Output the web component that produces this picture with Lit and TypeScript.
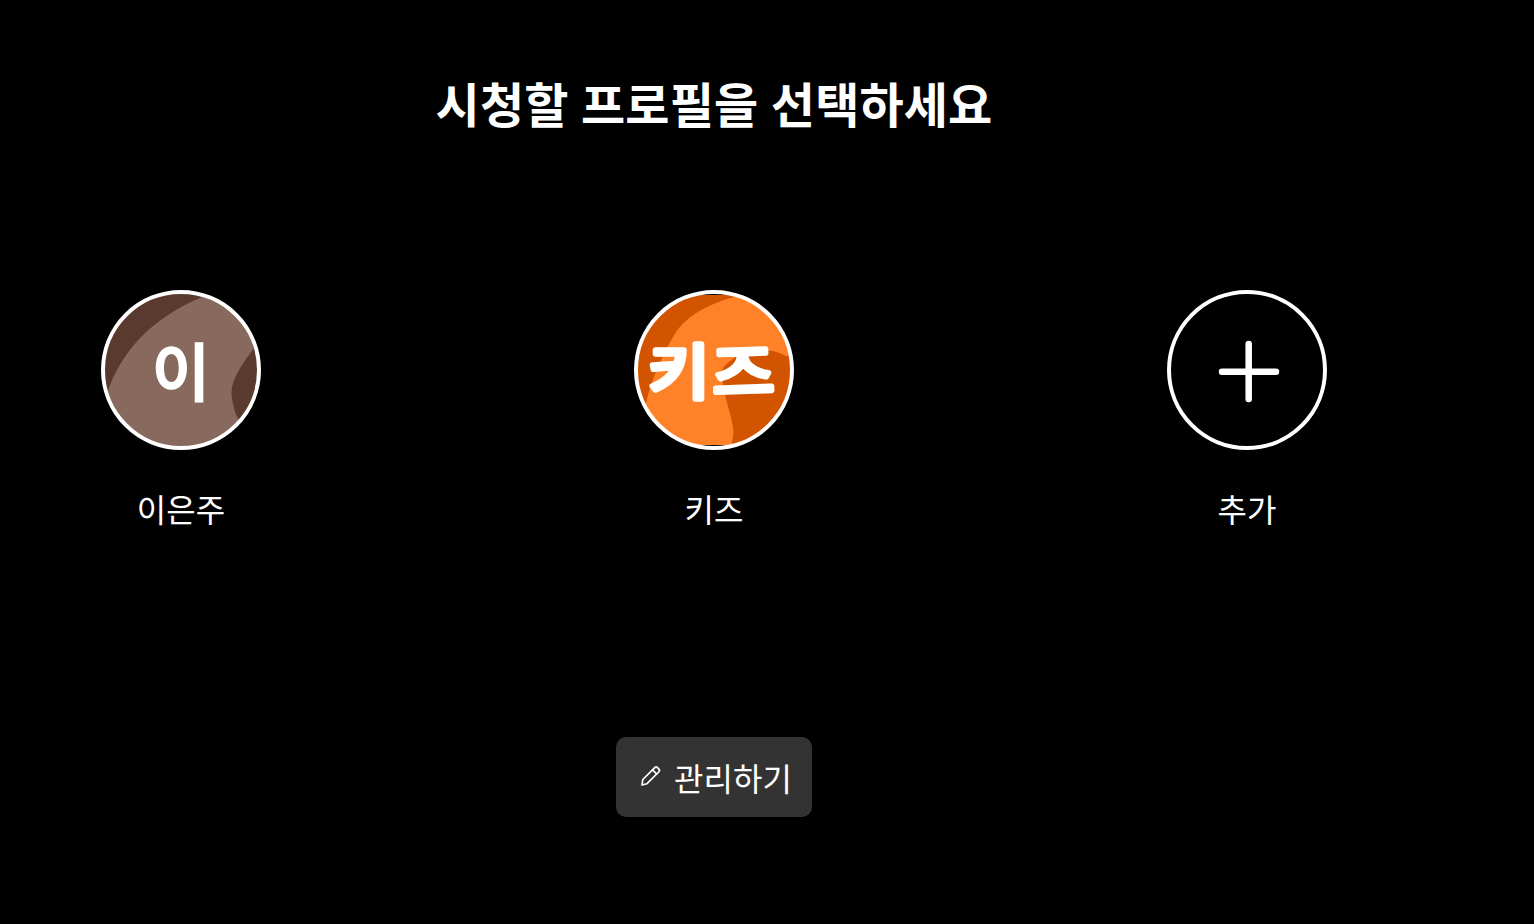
import { LitElement, html, css, svg } from "lit";
import { customElement } from "lit/decorators.js";

@customElement("app-root")
export class AppRoot extends LitElement {
  static styles = css`
    :host { display: block; width: 1534px; height: 924px; background: #000; color: #fff; font-family: "Noto Sans CJK KR", "Noto Sans", sans-serif; overflow: hidden; }
    .page { width: 1428px; height: 924px; display: flex; flex-direction: column; align-items: center; padding-top: 64px; box-sizing: border-box; }
    h1 { margin: 0; font-size: 48px; line-height: 76px; font-weight: 700; height: 76px; white-space: nowrap; letter-spacing: 0.15px; word-spacing: 1.5px; }
    .profiles { width: 100%; display: flex; justify-content: space-between; margin-top: 150px; }
    .profile { width: 362px; display: flex; flex-direction: column; align-items: center; gap: 35px; }
    .avatar { width: 160px; height: 160px; display: block; }
    .avatar text { font-family: "Noto Sans CJK KR", sans-serif; font-weight: 700; fill: #fff; }
    .avatar text.kid { font-weight: 400; stroke: #fff; stroke-width: 5.5px; stroke-linejoin: round; stroke-linecap: round; }
    .label { font-size: 32px; line-height: 46px; font-weight: 400; }
    .manage { margin-top: 206px; height: 80px; width: 196px; box-sizing: border-box; border-radius: 10px; background: #333; display: flex; align-items: center; justify-content: center; gap: 12px; padding-left: 2px; font-size: 32px; color: #fff; }
    .manage svg { width: 24px; height: 24px; flex: none; margin-top: -3px; }
  `;

  private ring() {
    return svg`<circle cx="80" cy="80" r="78" fill="none" stroke="#fff" stroke-width="4"/>`;
  }

  render() {
    return html`
      <div class="page">
        <h1>시청할 프로필을 선택하세요</h1>
        <div class="profiles">
          <div class="profile">
            <svg class="avatar" viewBox="0 0 160 160">
              <defs><clipPath id="c1"><circle cx="80" cy="80" r="78"/></clipPath></defs>
              <g clip-path="url(#c1)">
                <rect width="160" height="160" fill="#88695e"/>
                <path d="M118 0C70 18 28 44 7 100L0 112V0Z" fill="#5a3a2e"/>
                <path d="M153 58C140 76 128 92 131 108C132 116 134 124 138 130L160 140V50Z" fill="#5a3a2e"/>
              </g>
              ${this.ring()}
              <text x="80" y="106" text-anchor="middle" font-size="64">이</text>
            </svg>
            <div class="label">이은주</div>
          </div>
          <div class="profile">
            <svg class="avatar" viewBox="0 0 160 160">
              <defs><clipPath id="c2"><circle cx="80" cy="80" r="78"/></clipPath></defs>
              <g clip-path="url(#c2)">
                <rect y="5" width="160" height="150" fill="#ff8228"/>
                <path d="M108 5C70 14 50 28 39 47C28 66 18 88 12 113L0 120V5Z" fill="#d35400"/>
                <path d="M152 66C130 54 104 60 89 78C86 98 96 118 99 137C100 143 99 149 97 155H160V66Z" fill="#d35400"/>
              </g>
              ${this.ring()}
              <text class="kid" transform="translate(14 104) scale(1.12 1)" font-size="60">키</text>
              <text class="kid" transform="translate(79 105) rotate(-2) scale(1.12 1)" font-size="60">즈</text>
            </svg>
            <div class="label">키즈</div>
          </div>
          <div class="profile">
            <svg class="avatar" viewBox="0 0 160 160">
              ${this.ring()}
              <path d="M55 81.700H109M81.700 54V109" fill="none" stroke="#fff" stroke-width="6.500" stroke-linecap="round"/>
            </svg>
            <div class="label">추가</div>
          </div>
        </div>
        <div class="manage">
          <svg viewBox="0 0 24 24" fill="none" stroke="#fff" stroke-width="1.700" stroke-linejoin="round" stroke-linecap="round">
            <path d="M4 21L4.800 15.500L16.500 3.800C17.400 2.900 18.800 2.900 19.700 3.800L20.700 4.800C21.600 5.700 21.600 7.100 20.700 8L9 19.700Z"/>
            <path d="M14.500 5.800L18.700 10"/>
          </svg>
          <span>관리하기</span>
        </div>
      </div>
    `;
  }
}
